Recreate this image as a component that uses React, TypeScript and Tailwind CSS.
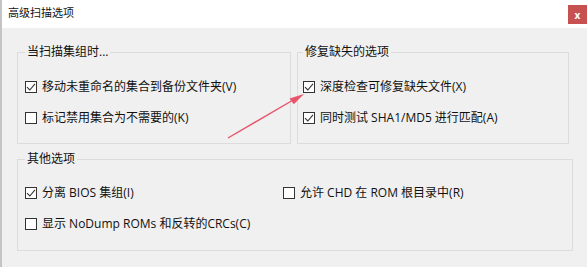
import React from "react";

const FONT = {
  fontFamily: "'Segoe UI', 'Open Sans', 'Noto Sans CJK SC', sans-serif",
};

function Box({ checked }: { checked: boolean }) {
  return (
    <span className="flex h-[12px] w-[12px] shrink-0 items-center justify-center border border-[#333333] bg-white">
      {checked && (
        <svg width="10" height="10" viewBox="0 0 10 10">
          <path d="M1 5.2 L3.8 8 L9 1.8" fill="none" stroke="#333" strokeWidth="1.1" />
        </svg>
      )}
    </span>
  );
}

function Check({ checked, label, className = "" }: { checked: boolean; label: string; className?: string }) {
  return (
    <div className={"flex h-[31px] items-center gap-[5px] " + className}>
      <Box checked={checked} />
      <span className="text-[12px] leading-[16px] text-[#111]">{label}</span>
    </div>
  );
}

export default function App() {
  return (
    <div
      className="relative flex h-[267px] w-[587px] flex-col overflow-hidden border-l-2 border-[#c4c4c4] bg-[#f0f0f0]"
      style={FONT}
    >
      <div className="flex h-[28px] shrink-0 items-start justify-between bg-white">
        <span className="pl-[6px] pt-[5px] text-[11px] leading-[16px] text-[#111]">高级扫描选项</span>
        <div className="mt-[5px] flex h-[19px] w-[19px] items-center justify-center bg-[#c75050] text-[10px] font-bold leading-none text-white">
          x
        </div>
      </div>
      <div className="flex flex-col gap-[7px] pl-[15px] pt-[16px]">
        <div className="flex gap-[6px]">
          <fieldset className="w-[274px] border border-[#dcdcdc] pb-[10px] pl-[7px] pt-[11px]">
            <legend className="px-[2px] text-[12px] leading-[16px] text-[#111]">当扫描集组时...</legend>
            <Check checked label="移动未重命名的集合到备份文件夹(V)" />
            <Check checked={false} label="标记禁用集合为不需要的(K)" />
          </fieldset>
          <fieldset className="w-[272px] border border-[#dcdcdc] pb-[10px] pl-[5px] pt-[11px]">
            <legend className="px-[2px] text-[12px] leading-[16px] text-[#111]">修复缺失的选项</legend>
            <Check checked label="深度检查可修复缺失文件(X)" />
            <Check checked label="同时测试 SHA1/MD5 进行匹配(A)" />
          </fieldset>
        </div>
        <fieldset className="w-[556px] border border-[#dcdcdc] pb-[11px] pl-[7px] pt-[10px]">
          <legend className="px-[2px] text-[12px] leading-[16px] text-[#111]">其他选项</legend>
          <div className="flex">
            <Check checked label="分离 BIOS 集组(I)" className="w-[258px]" />
            <Check checked={false} label="允许 CHD 在 ROM 根目录中(R)" />
          </div>
          <Check checked={false} label="显示 NoDump ROMs 和反转的CRCs(C)" />
        </fieldset>
      </div>
      <svg
        className="pointer-events-none absolute left-0 top-0"
        width="587"
        height="267"
        viewBox="0 0 587 267"
      >
        <line x1="226" y1="138" x2="292" y2="99.5" stroke="#e8546a" strokeWidth="1.4" />
        <path d="M302 94 L287.5 98.6 L291.8 104.2 Z" fill="#e8546a" />
      </svg>
    </div>
  );
}
